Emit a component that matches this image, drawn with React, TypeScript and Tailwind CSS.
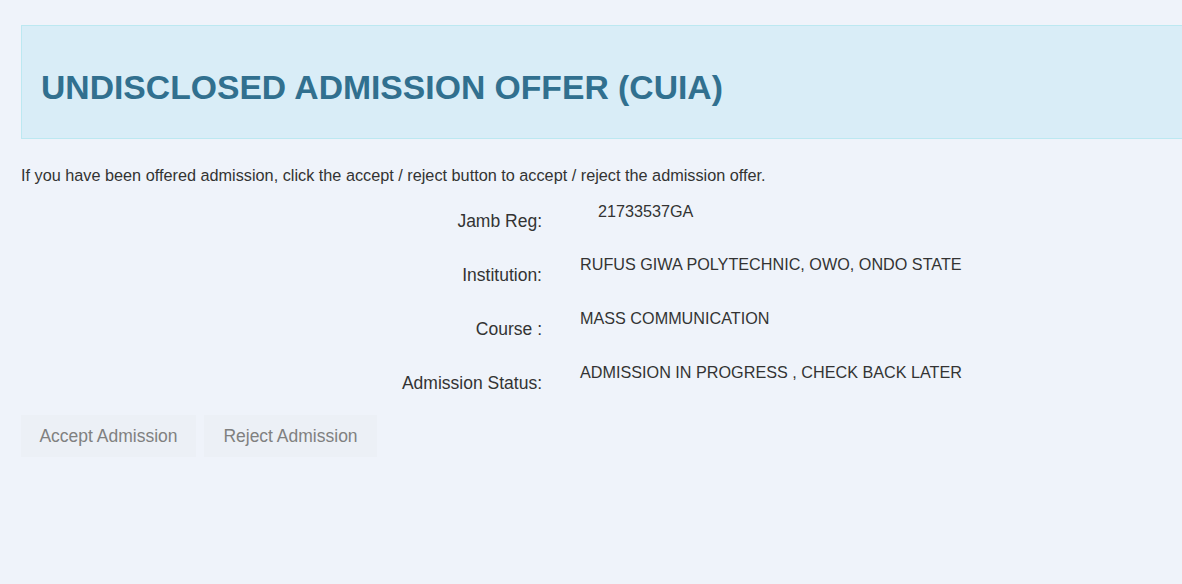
export default function App() {
  const rows = [
    { label: "Jamb Reg:", value: "21733537GA", indent: true },
    { label: "Institution:", value: "RUFUS GIWA POLYTECHNIC, OWO, ONDO STATE" },
    { label: "Course :", value: "MASS COMMUNICATION" },
    { label: "Admission Status:", value: "ADMISSION IN PROGRESS , CHECK BACK LATER" },
  ];

  return (
    <div className="min-h-[584px] bg-[#eff3fa] pl-[21px] pt-[25px] font-['Liberation_Sans',Arial,sans-serif] text-[#333]">
      {/* header */}
      <div className="h-[114px] border border-r-0 border-[#bce8f1] bg-[#d9edf7] pl-[19px] pt-[41px]">
        <h1 className="text-[33.7px] font-bold leading-[40px] text-[#31708f]">
          UNDISCLOSED ADMISSION OFFER (CUIA)
        </h1>
      </div>

      <p className="mt-[25px] text-[16.25px] leading-[22px]">
        If you have been offered admission, click the accept / reject button to accept / reject the admission offer.
      </p>

      <div className="mt-[12px] flex flex-col">
        {rows.map((r) => (
          <div key={r.label} className="flex h-[54px]">
            <div className="w-[521px] pt-[12px] text-right text-[17.5px] leading-[22px]">{r.label}</div>
            <div className={`${r.indent ? "pl-[56px] pt-[2px]" : "pl-[38px] pt-[1px]"} text-[16.2px] leading-[22px]`}>
              {r.value}
            </div>
          </div>
        ))}
      </div>

      <div className="mt-[1px] flex gap-[8px]">
        <button className="h-[42px] w-[175px] bg-[#ecf0f6] text-[17.5px] text-[#808080]">Accept Admission</button>
        <button className="h-[42px] w-[173px] bg-[#ecf0f6] text-[17.5px] text-[#808080]">Reject Admission</button>
      </div>
    </div>
  );
}
